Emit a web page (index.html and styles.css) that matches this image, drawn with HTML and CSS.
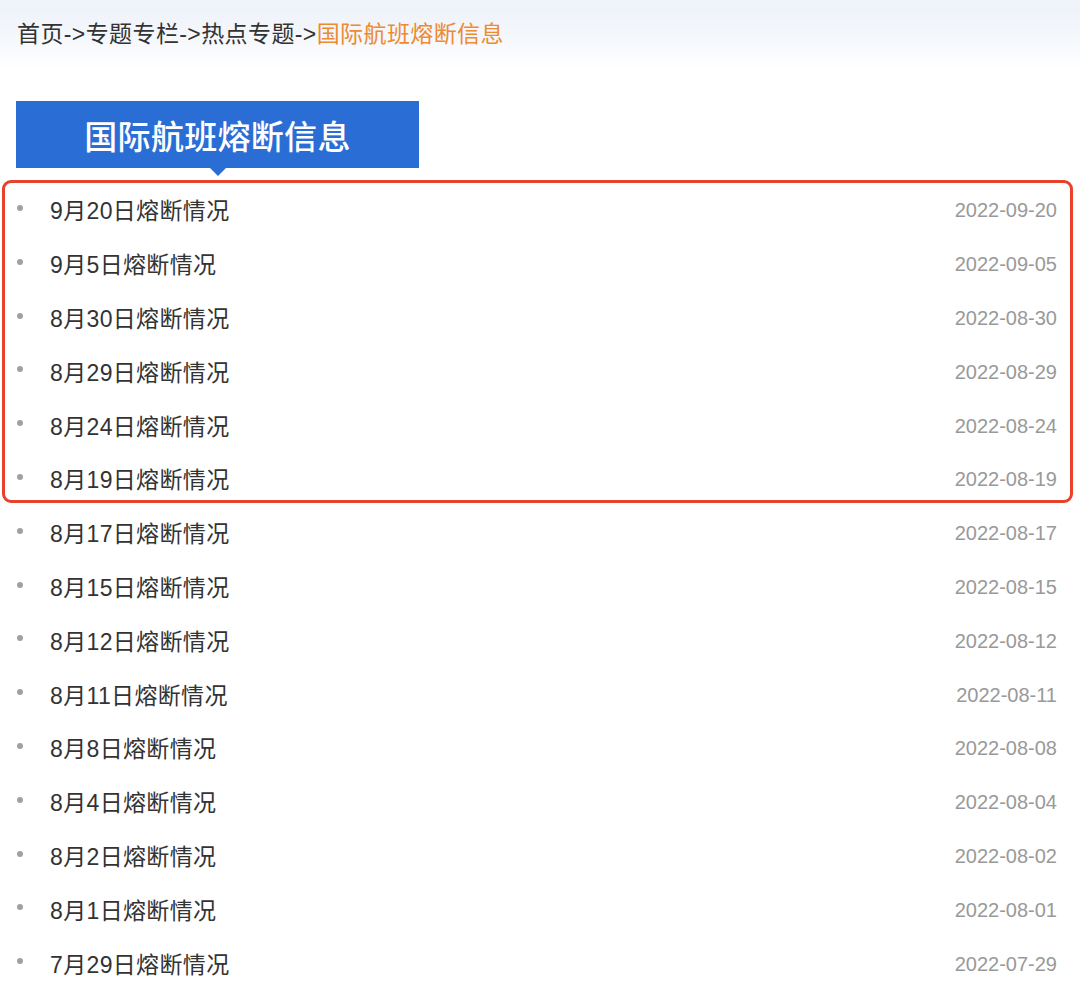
FILE: index.html
```html
<!DOCTYPE html>
<html lang="zh-CN">
<head>
<meta charset="utf-8">
<title>国际航班熔断信息</title>
<link rel="stylesheet" href="styles.css">
</head>
<body>
<div class="page">
  <div class="crumbs">
    <span>首页-&gt;专题专栏-&gt;热点专题-&gt;</span><span class="current">国际航班熔断信息</span>
  </div>
  <div class="title-wrap">
    <h1 class="title">国际航班熔断信息</h1>
  </div>
  <ul class="list">
    <li class="row"><span class="name">9月20日熔断情况</span><span class="date">2022-09-20</span></li>
    <li class="row"><span class="name">9月5日熔断情况</span><span class="date">2022-09-05</span></li>
    <li class="row"><span class="name">8月30日熔断情况</span><span class="date">2022-08-30</span></li>
    <li class="row"><span class="name">8月29日熔断情况</span><span class="date">2022-08-29</span></li>
    <li class="row"><span class="name">8月24日熔断情况</span><span class="date">2022-08-24</span></li>
    <li class="row"><span class="name">8月19日熔断情况</span><span class="date">2022-08-19</span></li>
    <li class="row"><span class="name">8月17日熔断情况</span><span class="date">2022-08-17</span></li>
    <li class="row"><span class="name">8月15日熔断情况</span><span class="date">2022-08-15</span></li>
    <li class="row"><span class="name">8月12日熔断情况</span><span class="date">2022-08-12</span></li>
    <li class="row"><span class="name">8月11日熔断情况</span><span class="date">2022-08-11</span></li>
    <li class="row"><span class="name">8月8日熔断情况</span><span class="date">2022-08-08</span></li>
    <li class="row"><span class="name">8月4日熔断情况</span><span class="date">2022-08-04</span></li>
    <li class="row"><span class="name">8月2日熔断情况</span><span class="date">2022-08-02</span></li>
    <li class="row"><span class="name">8月1日熔断情况</span><span class="date">2022-08-01</span></li>
    <li class="row"><span class="name">7月29日熔断情况</span><span class="date">2022-07-29</span></li>
  </ul>
  <div class="highlight"></div>
</div>
</body>
</html>
```
FILE: styles.css
```css
* { box-sizing: border-box; }
html, body { margin: 0; padding: 0; background: #fff; }
body {
  font-family: "Liberation Sans", "Noto Sans CJK SC", sans-serif;
  color: #333;
  width: 1080px;
  height: 991px;
  overflow: hidden;
}
.page { position: relative; }
.crumbs {
  height: 68px;
  padding-left: 17px;
  padding-bottom: 4px;
  display: flex;
  align-items: center;
  font-size: 23px;
  color: #333;
  background: linear-gradient(180deg, #eef2f9 0%, #f3f6fb 45%, #fbfcfe 85%, #ffffff 100%);
  letter-spacing: 0.4px;
}
.crumbs .current { color: #ec8b30; }
.title-wrap {
  padding: 33px 0 0 16px;
}
.title {
  position: relative;
  margin: 0;
  width: 403px;
  height: 67px;
  background: #2a6ed5;
  color: #fff;
  font-size: 33px;
  font-weight: 500;
  display: flex;
  align-items: center;
  justify-content: center;
  letter-spacing: 0.3px;
}
.title::after {
  content: "";
  position: absolute;
  left: 194px;
  bottom: -8px;
  border-left: 8px solid transparent;
  border-right: 8px solid transparent;
  border-top: 8px solid #2a6ed5;
}
.list {
  list-style: none;
  margin: 0;
  padding: 16px 23px 0 0;
}
.row {
  height: 53.8px;
  display: flex;
  align-items: center;
  justify-content: space-between;
  position: relative;
  padding-left: 50px;
}
.row::before {
  content: "";
  position: absolute;
  left: 17px;
  top: 21px;
  width: 6px;
  height: 6px;
  border-radius: 50%;
  background: #a0a0a0;
}
.name {
  font-size: 23px;
  color: #333;
  letter-spacing: 0.35px;
  margin-bottom: 3px;
}
.date {
  font-size: 20px;
  color: #999;
}
.highlight {
  position: absolute;
  left: 2px;
  top: 180px;
  width: 1071px;
  height: 323px;
  border: 3px solid #e8412c;
  border-radius: 9px;
  pointer-events: none;
}
```
